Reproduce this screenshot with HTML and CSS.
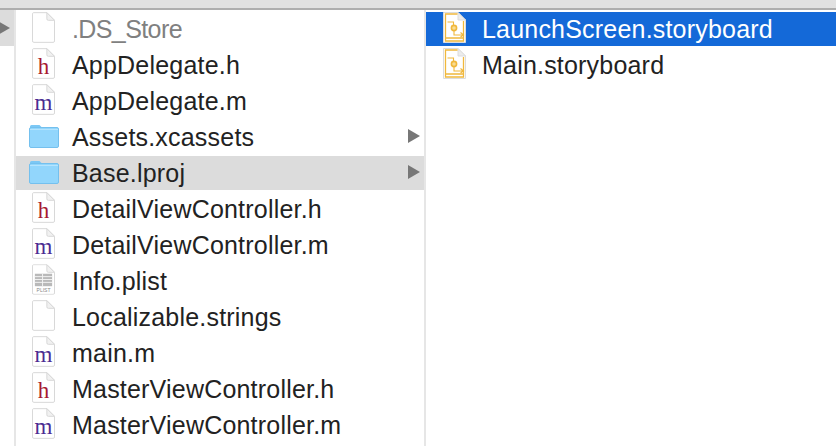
FILE: index.html
```html
<!DOCTYPE html>
<html>
<head>
<meta charset="utf-8">
<link rel="stylesheet" href="styles.css">
<title>Finder columns</title>
</head>
<body>
<svg class="defs" width="0" height="0">
  <defs>
    <symbol id="page" viewBox="0 0 24 32">
      <path d="M1.5 .5H15.5L23.5 8.5V30a1.5 1.5 0 0 1-1.5 1.5H2A1.5 1.5 0 0 1 .5 30V2A1.5 1.5 0 0 1 1.5 .5Z" fill="#fff" stroke="#d6d6d6"/>
      <path d="M15.5 .5V7A1.5 1.5 0 0 0 17 8.5H23.5Z" fill="#f1f1f1" stroke="#d6d6d6"/>
    </symbol>
    <symbol id="folder" viewBox="0 0 30 24">
      <path d="M1 4V2.5A1.5 1.5 0 0 1 2.5 1H10.5L13.5 4Z" fill="#7cc8f5"/>
      <rect x=".5" y="3.5" width="29" height="20" rx="1.5" fill="#92d6fc" stroke="#74c0ee"/>
      <rect x="1" y="5" width="28" height="1" fill="#b5e4fe"/>
    </symbol>
    <symbol id="board" viewBox="0 0 23 31">
      <path d="M.5 .5H15L22.5 8V30.5H.5Z" fill="#fff" stroke="#dcdcdc"/>
      <path d="M15 .5V8H22.5Z" fill="#ececec" stroke="#dcdcdc"/>
      <path d="M14.5 2H2.5V29H20.5V9M2.5 26H20.5" fill="none" stroke="#f0b83c" stroke-width="1.3"/>
      <path d="M4.5 10H10.5V14M11 19V23H20M17.5 20.5L20.5 23L17.5 25" fill="none" stroke="#f0b83c" stroke-width="1.1"/>
      <circle cx="11" cy="16" r="2.6" fill="#f9dc92" stroke="#f0b83c" stroke-width="1.6"/>
    </symbol>
  </defs>
</svg>
<div class="topbar"></div>
<main class="browser">
  <div class="sliver">
    <div class="sliver-row"><span class="arrow"></span></div>
  </div>
  <section class="column first">
    <div class="row"><svg class="ico page-ico"><use href="#page"/></svg><span class="name dim">.DS_Store</span></div>
    <div class="row"><span class="doc"><svg class="ico page-ico"><use href="#page"/></svg><b class="h">h</b></span><span class="name">AppDelegate.h</span></div>
    <div class="row"><span class="doc"><svg class="ico page-ico"><use href="#page"/></svg><b class="m">m</b></span><span class="name">AppDelegate.m</span></div>
    <div class="row"><svg class="ico folder-ico"><use href="#folder"/></svg><span class="name">Assets.xcassets</span><span class="arrow"></span></div>
    <div class="row active"><svg class="ico folder-ico"><use href="#folder"/></svg><span class="name">Base.lproj</span><span class="arrow"></span></div>
    <div class="row"><span class="doc"><svg class="ico page-ico"><use href="#page"/></svg><b class="h">h</b></span><span class="name">DetailViewController.h</span></div>
    <div class="row"><span class="doc"><svg class="ico page-ico"><use href="#page"/></svg><b class="m">m</b></span><span class="name">DetailViewController.m</span></div>
    <div class="row"><span class="doc"><svg class="ico page-ico" viewBox="0 0 24 32"><use href="#page" width="24" height="32"/><rect x="3" y="10" width="18" height="13" fill="#b9b9b9"/><path d="M3 13H21M3 16H21M3 19H21M11 10V23" stroke="#f2f2f2"/></svg><i class="plist">PLIST</i></span><span class="name">Info.plist</span></div>
    <div class="row"><svg class="ico page-ico"><use href="#page"/></svg><span class="name">Localizable.strings</span></div>
    <div class="row"><span class="doc"><svg class="ico page-ico"><use href="#page"/></svg><b class="m">m</b></span><span class="name">main.m</span></div>
    <div class="row"><span class="doc"><svg class="ico page-ico"><use href="#page"/></svg><b class="h">h</b></span><span class="name">MasterViewController.h</span></div>
    <div class="row"><span class="doc"><svg class="ico page-ico"><use href="#page"/></svg><b class="m">m</b></span><span class="name">MasterViewController.m</span></div>
  </section>
  <section class="column second">
    <div class="row selected"><svg class="ico board-ico"><use href="#board"/></svg><span class="name">LaunchScreen.storyboard</span></div>
    <div class="row"><svg class="ico board-ico"><use href="#board"/></svg><span class="name">Main.storyboard</span></div>
  </section>
</main>
</body>
</html>
```
FILE: styles.css
```css
* { box-sizing: border-box; }
html, body { margin: 0; height: 100%; }
body {
  width: 836px;
  height: 446px;
  overflow: hidden;
  background: #fff;
  font-family: "Liberation Sans", Arial, sans-serif;
  display: flex;
  flex-direction: column;
}
.defs { display: block; height: 0; }
.topbar {
  height: 10px;
  flex: none;
  background: #e1e1e1;
  border-bottom: 2px solid #aeaeae;
}
.browser { flex: 1; display: flex; min-height: 0; }
.sliver { width: 16px; flex: none; border-right: 2px solid #e6e6e6; overflow: hidden; }
.sliver-row { height: 36px; background: #dcdcdc; display: flex; align-items: center; }
.sliver-row .arrow { margin: 0 0 1px -2px; border-top-width: 7.5px; border-bottom-width: 7.5px; }
.column { overflow: hidden; flex: none; padding-top: 2px; }
.first { width: 410px; border-right: 2px solid #e6e6e6; }
.second { flex: 1; }
.row {
  height: 34px;
  margin-bottom: 2px;
  display: flex;
  align-items: center;
  padding-left: 14px;
  color: #222;
  font-size: 25px;
  letter-spacing: 0.2px;
}
.active { background: #dcdcdc; }
.selected { background: #1469d8; color: #fff; }
.doc { position: relative; display: flex; flex: none; }
.ico { display: block; flex: none; }
.page-ico { width: 23px; height: 31px; margin: 0 17px 3px 2px; }
.board-ico { width: 23px; height: 31px; margin: 0 16px 3px 3px; }
.folder-ico { width: 30px; height: 24px; margin: 0 13px 2px -1px; }
.name { white-space: nowrap; flex: 1; }
.dim { color: #808080; letter-spacing: -0.6px; }
.doc b {
  position: absolute;
  left: 2px;
  width: 23px;
  bottom: 4.3px;
  text-align: center;
  font-family: "Liberation Serif", serif;
  font-weight: 400;
  font-size: 23px;
  line-height: 1;
  letter-spacing: 0;
}
.doc .h { color: #a71930; }
.doc .m { color: #4b2c92; }
.doc .plist {
  position: absolute;
  left: 2px;
  width: 23px;
  bottom: 5px;
  text-align: center;
  font-size: 5px;
  font-style: normal;
  color: #888;
  line-height: 1;
  letter-spacing: 0;
}
.arrow {
  width: 0;
  height: 0;
  flex: none;
  margin: 0 4px 2px 0;
  border-left: 12px solid #777;
  border-top: 7px solid transparent;
  border-bottom: 7px solid transparent;
}
```
